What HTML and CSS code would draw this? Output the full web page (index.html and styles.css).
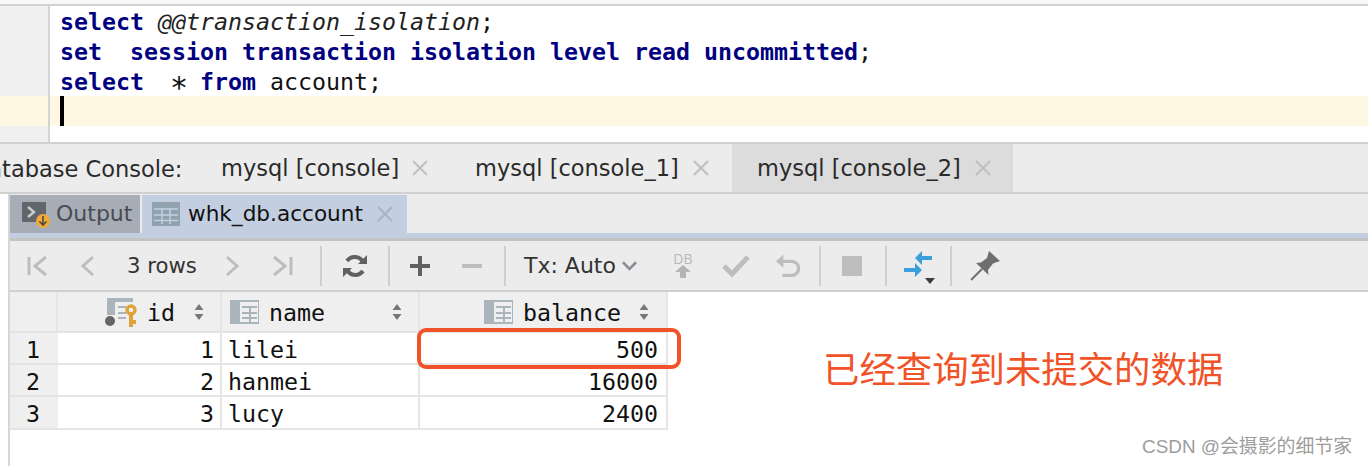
FILE: index.html
```html
<!DOCTYPE html>
<html lang="zh">
<head>
<meta charset="utf-8">
<title>Database Console</title>
<link rel="stylesheet" href="styles.css">
</head>
<body>
<div class="page">
  <section class="editor">
    <div class="gutter"><div class="gutter-current"></div></div>
    <div class="code">
      <div class="line"><b>select</b> <i>@@transaction_isolation</i>;</div>
      <div class="line"><b>set</b>  <b>session transaction isolation level read uncommitted</b>;</div>
      <div class="line"><b>select</b>  <span class="star">*</span> <b>from</b> account;</div>
      <div class="line current"><span class="caret"></span></div>
    </div>
  </section>

  <nav class="console-tabs">
    <div class="console-clip"><span class="console-label">Database Console:</span></div>
    <div class="ctab c1"><span>mysql [console]</span><svg class="x" viewBox="0 0 16 16"><path d="M1 1L15 15M15 1L1 15"/></svg></div>
    <div class="ctab c2"><span>mysql [console_1]</span><svg class="x" viewBox="0 0 16 16"><path d="M1 1L15 15M15 1L1 15"/></svg></div>
    <div class="ctab c3"><span>mysql [console_2]</span><svg class="x" viewBox="0 0 16 16"><path d="M1 1L15 15M15 1L1 15"/></svg></div>
  </nav>

  <section class="results">
    <div class="result-tabs">
      <div class="rtab output">
        <svg class="i-out" width="28" height="30" viewBox="0 0 28 30"><rect x="0" y="1" width="24" height="20" fill="#62666a"/><path d="M6 6L12 11L6 16" fill="none" stroke="#c9ccd0" stroke-width="2.400"/><circle cx="21" cy="20" r="7" fill="#f2a93b"/><path d="M21 15V24M17.500 20.500L21 24L24.500 20.500" fill="none" stroke="#4f4a3c" stroke-width="1.600"/></svg>
        <span>Output</span>
      </div>
      <div class="rtab account">
        <svg width="28" height="24" viewBox="0 0 28 24"><rect width="28" height="24" fill="#8fa2ad"/><path d="M2 7H26M2 13H26M2 18.500H26M10 7V22M18 7V22" stroke="#c3cfe0" stroke-width="1.500"/></svg>
        <span class="atxt">whk_db.account</span>
        <svg class="x" viewBox="0 0 16 16"><path d="M1 1L15 15M15 1L1 15"/></svg>
      </div>
    </div>
    <div class="blue-strip"></div>
    <div class="toolbar">
      <div class="tgroup nav">
        <svg class="ic" viewBox="0 0 24 24"><path d="M3 3V21" stroke-width="3"/><path d="M20 3L9 12L20 21" stroke-width="3"/></svg>
        <svg class="ic k2" viewBox="0 0 24 24"><path d="M16 3L6 12L16 21" stroke-width="3"/></svg>
        <span class="rows">3 rows</span>
        <svg class="ic k3" viewBox="0 0 24 24"><path d="M8 3L18 12L8 21" stroke-width="3"/></svg>
        <svg class="ic k4" viewBox="0 0 24 24"><path d="M4 3L15 12L4 21" stroke-width="3"/><path d="M21 3V21" stroke-width="3"/></svg>
      </div>
      <i class="sep"></i>
      <svg class="ic dark reload" viewBox="0 0 26 26"><path d="M21 9A9.500 9.500 0 0 0 5 8" stroke-width="4"/><path d="M5 17A9.500 9.500 0 0 0 21 18" stroke-width="4"/><path class="solid" d="M25 2V11H16ZM1 24V15H10Z"/></svg>
      <i class="sep"></i>
      <svg class="ic dark plus" viewBox="0 0 22 22"><path d="M11 1V21M1 11H21" stroke-width="4"/></svg>
      <svg class="ic minus" viewBox="0 0 22 22"><path d="M1 11H21" stroke-width="4"/></svg>
      <i class="sep"></i>
      <span class="tx">Tx: Auto</span>
      <svg class="chev" viewBox="0 0 16 10"><path d="M1 1L8 8L15 1"/></svg>
      <div class="dbup"><span>DB</span><svg viewBox="0 0 16 13" width="16" height="13"><path d="M8 0L16 7H11V13H5V7H0Z" fill="#b4b4b4"/></svg></div>
      <svg class="ic check" viewBox="0 0 28 24"><path d="M2 12L10 20L26 3" stroke-width="5"/></svg>
      <svg class="ic undo" viewBox="0 0 28 28"><path d="M6 9H18A7.500 7.500 0 0 1 18 24H8" stroke-width="3.500"/><path class="solid" d="M9 2V16L1 9Z"/></svg>
      <i class="sep s2"></i>
      <span class="stop"></span>
      <i class="sep s3"></i>
      <svg class="merge" width="34" height="36" viewBox="0 0 34 36"><path fill="#3a9fdb" d="M19 1V6H29V10H19V15L12 8ZM12 13V18H1V22H12V27L19 20Z"/><path fill="#3c3c3c" d="M22 28H32L27 34Z"/></svg>
      <i class="sep s4"></i>
      <svg class="pin" width="30" height="30" viewBox="0 0 30 30"><path fill="#6e6e6e" d="M19 0L30 10L23 12.500L18 19L18.500 24L6 12L11 11.500L17 7Z"/><path fill="none" stroke="#6e6e6e" stroke-width="2" d="M12 18L1 29"/></svg>
    </div>

    <div class="grid">
      <div class="corner"></div>
      <div class="hcell h-id">
        <svg class="pk" width="32" height="29" viewBox="0 0 32 29"><rect x="2" y="0" width="8" height="17" fill="#a9b4bb"/><rect x="10" y="0" width="18" height="4" fill="#a9b4bb"/><path d="M13 9H21M13 15H21M13 20H21" stroke="#a9b4bb" stroke-width="2"/><circle cx="5" cy="23" r="5" fill="#666"/><circle cx="26" cy="12" r="4" fill="none" stroke="#e0a33a" stroke-width="3.400"/><path d="M26 15V29M26 24H31" stroke="#e0a33a" stroke-width="4"/></svg>
        <span class="htxt">id</span>
        <svg class="sort" width="10" height="16" viewBox="0 0 10 16"><path d="M5 0L9.500 6H.5ZM5 16L.5 10H9.500Z"/></svg>
      </div>
      <div class="hcell h-name">
        <svg class="col" width="29" height="24" viewBox="0 0 29 24"><rect width="10" height="24" fill="#a9b4bb"/><path d="M10 1H29V23H10M12 7H27M12 13H27M12 18H27M20 7V23" fill="none" stroke="#a9b4bb" stroke-width="2"/></svg>
        <span class="htxt">name</span>
        <svg class="sort" width="10" height="16" viewBox="0 0 10 16"><path d="M5 0L9.500 6H.5ZM5 16L.5 10H9.500Z"/></svg>
      </div>
      <div class="hcell h-bal">
        <svg class="col" width="29" height="24" viewBox="0 0 29 24"><rect width="10" height="24" fill="#a9b4bb"/><path d="M10 1H29V23H10M12 7H27M12 13H27M12 18H27M20 7V23" fill="none" stroke="#a9b4bb" stroke-width="2"/></svg>
        <span class="htxt">balance</span>
        <svg class="sort" width="10" height="16" viewBox="0 0 10 16"><path d="M5 0L9.500 6H.5ZM5 16L.5 10H9.500Z"/></svg>
      </div>

      <div class="rowno">1</div><div class="cell num">1</div><div class="cell">lilei</div><div class="cell num last">500</div>
      <div class="rowno">2</div><div class="cell num">2</div><div class="cell">hanmei</div><div class="cell num last">16000</div>
      <div class="rowno">3</div><div class="cell num">3</div><div class="cell">lucy</div><div class="cell num last">2400</div>
    </div>
  </section>

  <div class="mark"></div>
  <div class="note">已经查询到未提交的数据</div>
  <div class="watermark">CSDN @会摄影的细节家</div>
</div>
</body>
</html>
```
FILE: styles.css
```css
* { box-sizing: border-box; }
html, body { margin: 0; padding: 0; background: #fff; }
.page { position: relative; width: 1368px; height: 466px; overflow: hidden; background: #fff; }

.editor { display: flex; height: 144px; padding-top: 6px; border-bottom: 2px solid #d0d0d0; background: linear-gradient(#f8f8f8 0 4px, #d2d2d2 4px 6px, #fff 6px); }
.gutter { width: 50px; height: 136px; background: #f0f0f0; border-right: 2px solid #d4d4d4; padding-top: 90px; }
.gutter-current { height: 30px; background: #fef8e3; }
.code { flex: 1; font: 23.250px/30px "DejaVu Sans Mono", monospace; color: #111; }
.line { height: 30px; padding-left: 10px; white-space: pre; }
.line:nth-child(-n+3) { padding-top: 1px; }
.line b { color: #000080; font-weight: 700; }
.line i { font-style: italic; color: #222; }
.star { font-size: 30px; margin: 0 -2.060px; vertical-align: -8px; line-height: 0; }
.current { background: #fef8e3; }
.caret { display: block; width: 4px; height: 30px; background: #000; }

.console-tabs { display: flex; height: 50px; background: #ececec; border-bottom: 2px solid #d0d0d0; font: 22.500px/50px "DejaVu Sans", sans-serif; color: #2a2a2a; }
.console-clip { width: 200px; height: 48px; overflow: hidden; }
.console-label { display: block; margin-left: -29px; white-space: nowrap; }
.ctab { display: flex; align-items: center; height: 48px; white-space: nowrap; }
.x { width: 16px; height: 16px; flex: none; }
.x path { stroke: #bfbfbf; stroke-width: 2; fill: none; }
.c1 { width: 254px; padding-left: 21px; }
.c2 { width: 278px; padding-left: 21px; }
.c3 { width: 281px; padding-left: 25px; background: #dcdcdc; }
.ctab .x { margin-left: 14px; }
.c1 .x { margin-left: 13px; }

.results { margin-left: 8px; border-left: 2px solid #d6d6d6; height: 272px; background: #fff; }
.result-tabs { display: flex; height: 39px; background: #ececec; padding-top: 1px; font: 22px/34px "DejaVu Sans", sans-serif; }
.rtab { display: flex; align-items: center; height: 38px; white-space: nowrap; }
.output { width: 130px; background: #a6adb7; color: #484c52; padding-left: 12px; }
.i-out { margin-right: 6px; margin-top: 4px; flex: none; }
.account { width: 265px; margin-left: 2px; padding-left: 10px; background: #c3cfe0; color: #111; }
.atxt { margin-left: 8px; font-size: 21.600px; }
.account .x { margin-left: 14px; }
.account .x path { stroke: #a9b3c0; }
.blue-strip { height: 8px; background: #c3cfe0; border-bottom: 3px solid #c4c4c4; }
.toolbar { display: flex; align-items: center; height: 51px; background: #ececec; border-bottom: 2px solid #d0d0d0; font: 22px/1 "DejaVu Sans", sans-serif; color: #333; }
.tgroup { display: flex; align-items: center; }
.ic { flex: none; fill: none; stroke: #bdbdbd; }
.ic .solid { fill: #bdbdbd; stroke: none; }
.nav .ic { width: 24px; height: 24px; }
.nav { width: 310px; padding-left: 16px; }
.k2 { margin-left: 27px; }
.rows { margin-left: 26px; width: 92px; white-space: nowrap; font-size: 21.200px; }
.k4 { margin-left: 27px; }
.sep { display: block; width: 2px; height: 40px; background: #cfcfcf; flex: none; }
.dark { stroke: #616161; }
.dark .solid { fill: #616161; }
.reload { width: 26px; height: 26px; margin: 0 20px; }
.plus { width: 22px; height: 22px; margin-left: 19px; }
.minus { width: 22px; height: 22px; margin-left: 30px; margin-right: 21px; }
.tx { margin-left: 18px; white-space: nowrap; }
.chev { width: 15px; height: 10px; margin-left: 6px; fill: none; stroke: #8a8f94; stroke-width: 2.800; flex: none; }
.dbup { display: flex; flex-direction: column; align-items: center; width: 22px; margin-left: 35px; font: 14px/12px "Open Sans", sans-serif; color: #b8b8b8; }
.check { width: 28px; height: 24px; margin-left: 28px; }
.undo { width: 28px; height: 26px; margin-left: 24px; }
.s2 { margin-left: 17px; }
.stop { display: block; width: 20px; height: 20px; background: #bdbdbd; margin-left: 21px; flex: none; }
.s3 { margin-left: 23px; }
.merge { margin-left: 16px; flex: none; margin-top: 4px; }
.s4 { margin-left: 13px; }
.pin { margin-left: 18px; flex: none; }

.grid { display: grid; width: 658px; grid-template-columns: 48px 164px 198px 248px; grid-template-rows: 41px 32px 32px 33px; font: 23.250px/30px "DejaVu Sans Mono", monospace; color: #111; }
.corner, .hcell { background: #efefef; border-right: 2px solid #e6e6e6; border-bottom: 2px solid #e4e4e4; }
.hcell { display: flex; align-items: center; padding-top: 1px; }
.htxt { padding-top: 2px; }
.h-id { justify-content: flex-end; padding-right: 16px; }
.h-id .htxt { margin: 0 19px 0 10px; }
.h-name { padding-left: 8px; }
.h-name .htxt { margin-left: 10px; }
.h-name .sort { margin-left: auto; margin-right: 16px; }
.h-bal { justify-content: flex-end; padding-right: 17px; }
.h-bal .htxt { margin: 0 18px 0 10px; }
.sort { flex: none; fill: #777; }
.rowno { background: #efefef; border-bottom: 2px solid #e4e4e4; padding: 2px 0 0 16px; }
.cell { background: #fff; border-right: 2px solid #e6e6e6; border-bottom: 2px solid #e6e6e6; padding: 2px 6px 0; }
.num { text-align: right; }
.last { padding-right: 8px; }

.mark { position: absolute; left: 417px; top: 328px; width: 264px; height: 41px; border: 4px solid #f15329; border-radius: 9px; }
.note { position: absolute; left: 823px; top: 344px; font: 36.400px/46px "Noto Sans CJK SC", sans-serif; color: #f15329; white-space: nowrap; }
.watermark { position: absolute; left: 1142px; top: 435px; font: 18.900px/24px "Liberation Sans", "Noto Sans CJK SC", sans-serif; color: #9d9d9d; white-space: nowrap; }
```
